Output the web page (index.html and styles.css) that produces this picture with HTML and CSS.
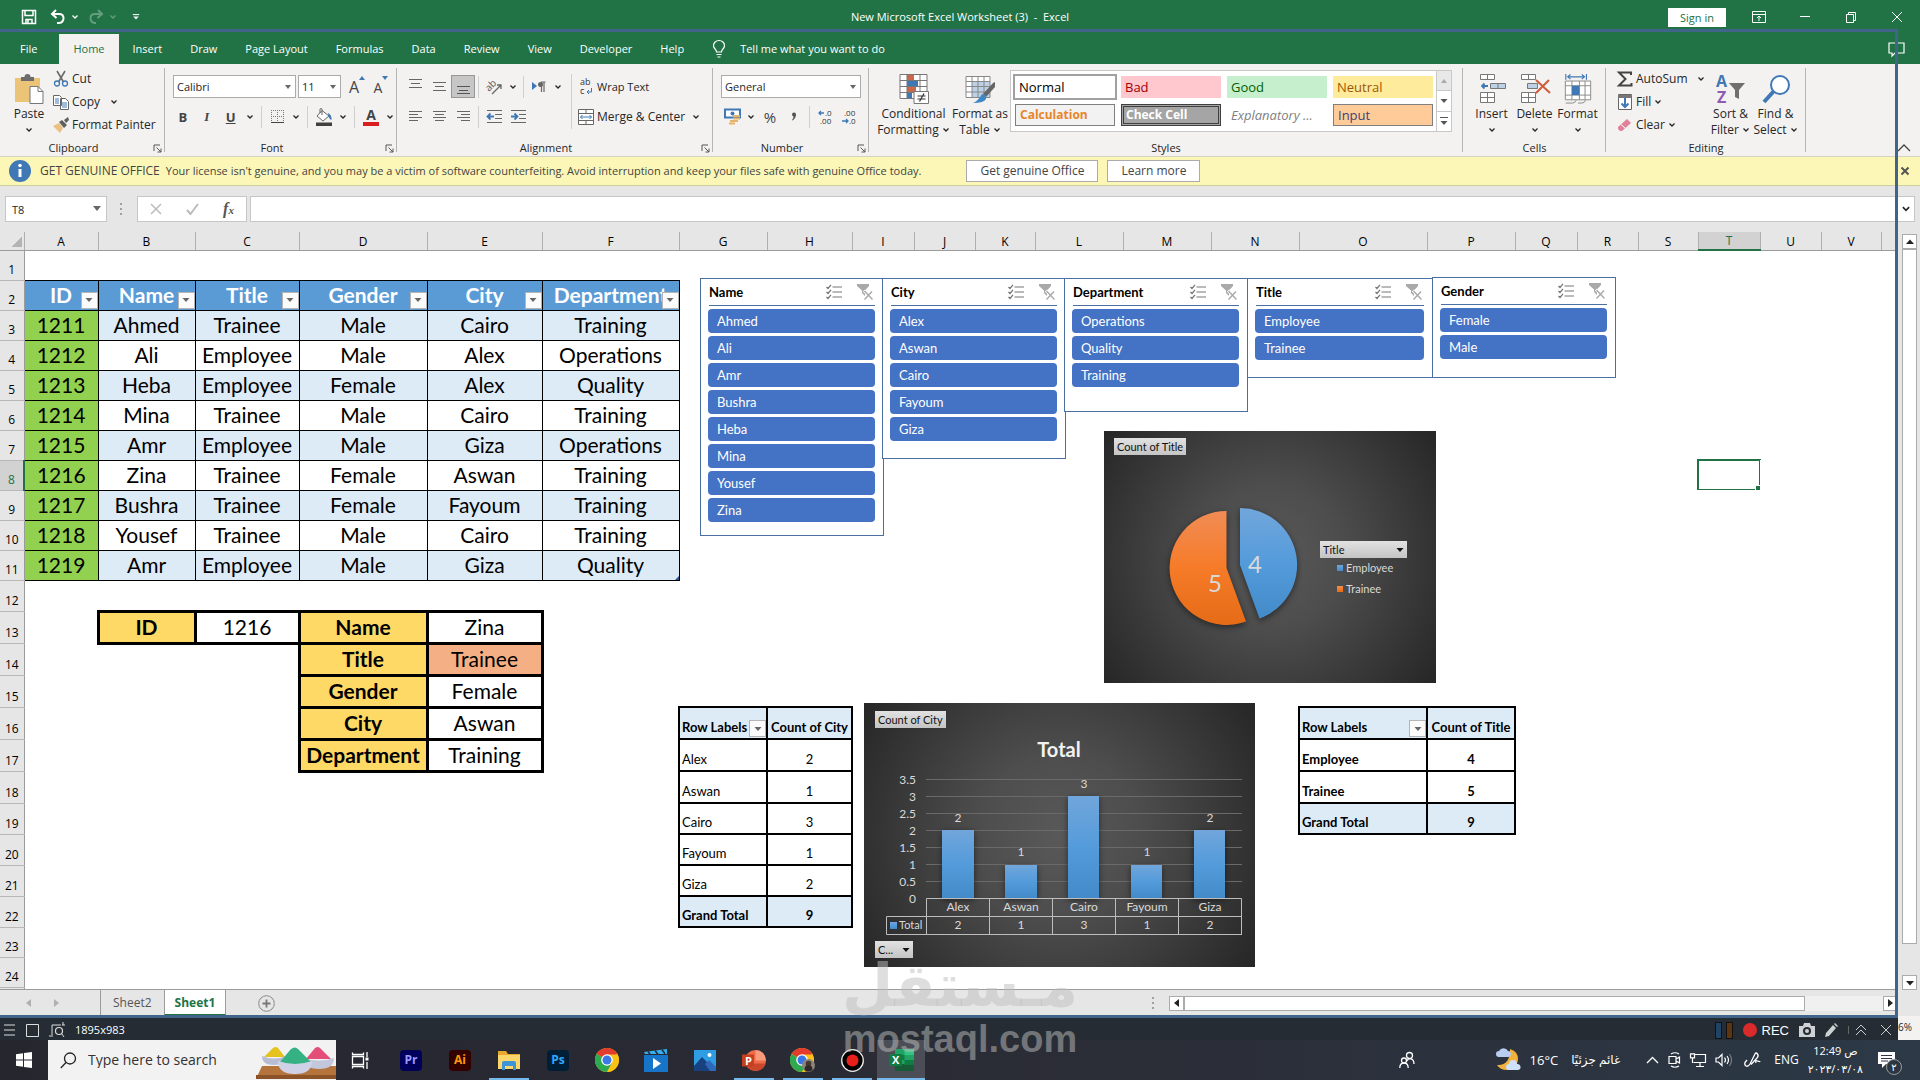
FILE: index.html
```html
<!DOCTYPE html>
<html lang="en">
<head>
    <meta charset="UTF-8">
    <meta name="viewport" content="width=device-width, initial-scale=1.0">
    <title>New Microsoft Excel Worksheet (3) - Excel</title>
    <link rel="stylesheet" href="styles.css">
</head>
<body>

<!-- shared icons -->
<svg class="defs" width="0" height="0" aria-hidden="true">
    <defs>
        <symbol id="chev" viewBox="0 0 8 8"><path d="M1.500 2.500 4 5l2.500-2.500" fill="none" stroke="currentColor" stroke-width="1.300"/></symbol>
        <symbol id="tri" viewBox="0 0 8 8"><path d="M0.500 2h7L4 6z" fill="currentColor"/></symbol>
        <symbol id="launch" viewBox="0 0 9 9"><path d="M1 7V1h6M3.500 3.500 8 8M8 4.500V8H4.500" fill="none" stroke="#555"/></symbol>
        <symbol id="multi" viewBox="0 0 16 16"><path d="M6.500 3H16M6.500 8H16M6.500 13H16M.5 3l1.500 1.500L5 .8M.5 8l1.500 1.500L5 5.800M.5 13l1.500 1.500L5 10.800" fill="none" stroke="#767676" stroke-width="1.200"/></symbol>
        <symbol id="nofilter" viewBox="0 0 16 16"><path d="M0 0h12v2L8 6.500V12L5 9V6.500L0 2z" fill="#a9a9a9"/><path d="M7 6.500l8.500 9M15.500 7 7.500 15.500" stroke="#fff" stroke-width="3"/><path d="M7.500 7l8 8.500M15 7.500l-7.500 8" stroke="#a9a9a9" stroke-width="1.400"/></symbol>
        <symbol id="chrome" viewBox="0 0 24 24"><circle cx="12" cy="12" r="12" fill="#fbc116"/><path d="M12 12 1.600 6A12 12 0 0 1 22.400 6z" fill="#e33b2e"/><path d="M12 12 1.600 6A12 12 0 0 0 12 24l5.200-9z" fill="#2da94f"/><path d="M12 6.500h10.600A12 12 0 0 1 12 24l5-9z" fill="#fbc116"/><circle cx="12" cy="12" r="5.800" fill="#fff"/><circle cx="12" cy="12" r="4.500" fill="#3b78e7"/></symbol>
        <linearGradient id="blue" x1="0" y1="0" x2="0" y2="1"><stop offset="0" stop-color="#71a6db"/><stop offset=".5" stop-color="#549bdb"/><stop offset="1" stop-color="#438ac9"/></linearGradient>
        <linearGradient id="orange" x1="0" y1="0" x2="0" y2="1"><stop offset="0" stop-color="#f18c55"/><stop offset=".5" stop-color="#f67b28"/><stop offset="1" stop-color="#e56b17"/></linearGradient>
    </defs>
</svg>

<header class="titlebar">
    <div class="quick">
        <button aria-label="Save"><svg width="16" height="16" viewBox="0 0 16 16"><path d="M1.500 1.500h13v13h-13zM4 1.500v5h8v-5M5 14.500v-4h6v4M7 11v3" fill="none" stroke="#fff" stroke-width="1.500"/></svg></button>
        <button aria-label="Undo"><svg width="16" height="16" viewBox="0 0 16 16"><path d="M6 1 2 5l4.500 4M2 5h7c6 0 6 8 0 9H7" fill="none" stroke="#fff" stroke-width="2"/></svg></button>
        <svg class="light" width="8" height="8"><use href="#chev"/></svg>
        <button class="off" aria-label="Redo"><svg width="16" height="16" viewBox="0 0 16 16"><path d="M10 1l4 4-4.500 4M14 5H7c-6 0-6 8 0 9h1" fill="none" stroke="#fff" stroke-width="2"/></svg></button>
        <svg class="light off" width="8" height="8"><use href="#chev"/></svg>
        <button class="more" aria-label="Customize toolbar"><svg width="8" height="10" viewBox="0 0 10 10"><path d="M1 2h8" stroke="#fff" stroke-width="1.300"/><path d="M1.500 4.500h7L5 8z" fill="#fff"/></svg></button>
    </div>
    <div class="doc-title">New Microsoft Excel Worksheet (3)&nbsp; -&nbsp; Excel</div>
    <div class="win">
        <button class="signin">Sign in</button>
        <button aria-label="Ribbon options"><svg width="14" height="14" viewBox="0 0 14 14"><path d="M.5 1.500h13v11H.5zM.5 4.500h13M7 11V6M5 8l2-2 2 2" fill="none" stroke="#fff"/></svg></button>
        <button aria-label="Minimize"><svg width="14" height="14" viewBox="0 0 14 14"><path d="M2 6.500h10" stroke="#fff"/></svg></button>
        <button aria-label="Restore"><svg width="14" height="14" viewBox="0 0 14 14"><path d="M2.500 4.500h7v8h-7zM4.500 4.500V2.500h7v8h-2" fill="none" stroke="#fff"/></svg></button>
        <button aria-label="Close"><svg width="14" height="14" viewBox="0 0 14 14"><path d="M2 2l10 10M12 2 2 12" stroke="#fff"/></svg></button>
    </div>
</header>

<nav class="tabs">
    <a href="#" class="file">File</a>
    <a href="#" class="on">Home</a>
    <a href="#">Insert</a>
    <a href="#">Draw</a>
    <a href="#">Page Layout</a>
    <a href="#">Formulas</a>
    <a href="#">Data</a>
    <a href="#">Review</a>
    <a href="#">View</a>
    <a href="#">Developer</a>
    <a href="#">Help</a>
    <a href="#" class="tell"><svg width="14" height="18" viewBox="0 0 14 18"><path d="M4.500 12C4.500 9 1.500 9 1.500 5.500a5.500 5 0 0 1 11 0C12.500 9 9.500 9 9.500 12zM4.500 14.500h5M5.500 17h3" fill="none" stroke="#fff" stroke-width="1.200"/></svg>Tell me what you want to do</a>
    <button class="comment" aria-label="Comments"><svg width="17" height="15" viewBox="0 0 17 15"><path d="M1 1h15v10H7l-3 3v-3H1z" fill="none" stroke="#fff" stroke-width="1.200"/></svg></button>
</nav>

<section class="ribbon">
    <div class="group clipboard">
        <div class="tools">
            <button class="big"><svg width="30" height="30" viewBox="0 0 30 30"><path d="M1 4h25v24H1z" fill="#ebc478"/><path d="M7 7V3h3.500a3 3 0 0 1 6 0H20v4z" fill="#6c6c6c"/><path d="M16 12.500h8l5 5v12H16z" fill="#fff" stroke="#777"/><path d="M24 12.500v5h5" fill="none" stroke="#777"/></svg>Paste<svg width="8" height="16"><use href="#chev"/></svg></button>
            <div class="stack">
                <button><svg width="16" height="16" viewBox="0 0 16 16"><path d="M4 0l6.500 11M12 0 5.500 11" stroke="#6a6a6a" stroke-width="1.600"/><circle cx="4" cy="12.500" r="2.500" fill="none" stroke="#3f78b5" stroke-width="1.300"/><circle cx="12" cy="12.500" r="2.500" fill="none" stroke="#3f78b5" stroke-width="1.300"/></svg>Cut</button>
                <button><svg width="16" height="16" viewBox="0 0 16 16"><path d="M.5 1.500h6l2 2v8h-8zM7.500 4.500h5l3 3v8h-8z" fill="#fff" stroke="#666"/><path d="M2 5h4M2 7h4M2 9h4M9 9h5M9 11h5M9 13h5" stroke="#3f78b5"/></svg>Copy<svg class="gap" width="8" height="8"><use href="#chev"/></svg></button>
                <button><svg width="16" height="16" viewBox="0 0 16 16"><path d="M0 9l6-3 4 5-3 5z" fill="#ebc080"/><path d="M6 5l3-2 5 5-3 3zM11 3l4-3 1 3-3 3z" fill="#5f5f5f"/></svg>Format Painter</button>
            </div>
        </div>
        <div class="name">Clipboard</div>
        <svg class="launcher" width="9" height="9"><use href="#launch"/></svg>
    </div>

    <div class="group font">
        <div class="tools rows">
            <div class="row fonts">
                <span class="combo wide"><select aria-label="Font"><option>Calibri</option></select></span>
                <span class="combo narrow"><select aria-label="Font size"><option>11</option></select></span>
                <button class="ico grow" aria-label="Increase font size">A<svg width="6" height="6"><path d="M0 5h6L3 1z" fill="#3f78b5"/></svg></button>
                <button class="ico shrink" aria-label="Decrease font size">A<svg width="6" height="6"><path d="M0 1h6L3 5z" fill="#3f78b5"/></svg></button>
            </div>
            <div class="row">
                <button class="ico"><b>B</b></button>
                <button class="ico"><i>I</i></button>
                <button class="ico"><u>U</u></button>
                <button class="drop" aria-label="Underline options"><svg width="8" height="8"><use href="#chev"/></svg></button>
                <span class="sep"></span>
                <button class="ico" aria-label="Borders"><svg width="15" height="15" viewBox="0 0 15 15"><path d="M1.500 1v12M7.500 1v12M13.500 1v12M1 1.500h13M1 7.500h13" stroke="#777" stroke-dasharray="1 1"/><path d="M1 13.500h13" stroke="#444"/></svg></button>
                <button class="drop" aria-label="Border options"><svg width="8" height="8"><use href="#chev"/></svg></button>
                <span class="sep"></span>
                <button class="ico" aria-label="Fill color"><svg width="18" height="18" viewBox="0 0 18 18"><path d="M7 2.500 14 8l-6 5-6-5zM7 7V1q0-1-2 0v4" fill="#fff" stroke="#666"/><path d="M13 5q4 2 3.500 7-3-1-3.500-7z" fill="#3f78b5"/><path d="M1 14.500h16V18H1z" fill="#404040"/></svg></button>
                <button class="drop" aria-label="Fill options"><svg width="8" height="8"><use href="#chev"/></svg></button>
                <span class="sep"></span>
                <button class="ico fcolor" aria-label="Font color">A</button>
                <button class="drop" aria-label="Font color options"><svg width="8" height="8"><use href="#chev"/></svg></button>
            </div>
        </div>
        <div class="name">Font</div>
        <svg class="launcher" width="9" height="9"><use href="#launch"/></svg>
    </div>

    <div class="group align">
        <div class="tools">
            <div class="rows left">
                <div class="row">
                    <button class="ico" aria-label="Top align"><svg width="15" height="15" viewBox="0 0 15 15"><path d="M1 .5h13M3 4.500h9M1 8.500h13" stroke="#666"/></svg></button>
                    <button class="ico" aria-label="Middle align"><svg width="15" height="15" viewBox="0 0 15 15"><path d="M1 3.500h13M3 7.500h9M1 11.500h13" stroke="#666"/></svg></button>
                    <button class="ico active" aria-label="Bottom align"><svg width="15" height="15" viewBox="0 0 15 15"><path d="M1 7.500h13M3 11.500h9M1 14.500h13" stroke="#555"/></svg></button>
                    <span class="sep"></span>
                    <button class="ico" aria-label="Orientation"><svg width="17" height="16" viewBox="0 0 17 16"><text x="0" y="10" transform="rotate(-45 5 8)" font-size="10" fill="#555">ab</text><path d="M6 15 15 6M15 10V6h-4" fill="none" stroke="#666" stroke-width="1.300"/></svg></button>
                    <button class="drop" aria-label="Orientation options"><svg width="8" height="8"><use href="#chev"/></svg></button>
                    <span class="sep"></span>
                    <button class="ico" aria-label="Text direction"><svg width="14" height="12" viewBox="0 0 14 12"><path d="M0 1l5 4-5 4z" fill="#3f78b5"/><path d="M9.500 1v10M12 1v10M13.500 1H9" stroke="#666" stroke-width="1.200" fill="none"/><circle cx="8.500" cy="3.500" r="2.500" fill="#666"/></svg></button>
                    <button class="drop" aria-label="Direction options"><svg width="8" height="8"><use href="#chev"/></svg></button>
                </div>
                <div class="row">
                    <button class="ico" aria-label="Align left"><svg width="15" height="15" viewBox="0 0 15 15"><path d="M1 2.500h13M1 5.500h9M1 8.500h13M1 11.500h9" stroke="#666"/></svg></button>
                    <button class="ico" aria-label="Center"><svg width="15" height="15" viewBox="0 0 15 15"><path d="M1 2.500h13M3 5.500h9M1 8.500h13M3 11.500h9" stroke="#666"/></svg></button>
                    <button class="ico" aria-label="Align right"><svg width="15" height="15" viewBox="0 0 15 15"><path d="M1 2.500h13M5 5.500h9M1 8.500h13M5 11.500h9" stroke="#666"/></svg></button>
                    <span class="sep"></span>
                    <button class="ico" aria-label="Decrease indent"><svg width="17" height="15" viewBox="0 0 17 15"><path d="M1 1.500h15M9 5.500h7M9 9.500h7M1 13.500h15" stroke="#666"/><path d="M8 7.500H2M4.500 4.500l-3 3 3 3" fill="none" stroke="#3f78b5" stroke-width="1.800"/></svg></button>
                    <button class="ico" aria-label="Increase indent"><svg width="17" height="15" viewBox="0 0 17 15"><path d="M1 1.500h15M9 5.500h7M9 9.500h7M1 13.500h15" stroke="#666"/><path d="M1 7.500h6M4.500 4.500l3 3-3 3" fill="none" stroke="#3f78b5" stroke-width="1.800"/></svg></button>
                </div>
            </div>
            <div class="rows right">
                <button class="row txt"><svg width="16" height="16" viewBox="0 0 16 16"><text x="2" y="6" font-size="9" fill="#333">ab</text><text x="2" y="15" font-size="9" fill="#333">c</text><path d="M13.500 9v4H9M11 11l-2 2 2 2" fill="none" stroke="#3f78b5"/></svg>Wrap Text</button>
                <button class="row txt"><svg width="16" height="16" viewBox="0 0 16 16"><path d="M.5.5h15v15H.5zM.5 4.500h15M.5 11.500h15M8 .5v4M8 11.500v4" fill="#fff" stroke="#666"/><path d="M2.500 8h11M4.500 6l-2 2 2 2M11.500 6l2 2-2 2" fill="none" stroke="#3f78b5"/></svg>Merge &amp; Center<svg class="gap" width="8" height="8"><use href="#chev"/></svg></button>
            </div>
        </div>
        <div class="name">Alignment</div>
        <svg class="launcher" width="9" height="9"><use href="#launch"/></svg>
    </div>

    <div class="group number">
        <div class="tools rows">
            <div class="row"><span class="combo full"><select aria-label="Number format"><option>General</option></select></span></div>
            <div class="row">
                <button class="ico" aria-label="Accounting format"><svg width="17" height="17" viewBox="0 0 17 17"><path d="M1 1.500h15v8H1z" fill="#fff" stroke="#3f78b5" stroke-width="2"/><circle cx="8.500" cy="5.500" r="2" fill="#3f78b5"/><path d="M9 8h7M9 10.500h7M6 13h8M5 15.500h6" stroke="#e8b26b" stroke-width="1.800"/></svg></button>
                <button class="drop" aria-label="Currency options"><svg width="8" height="8"><use href="#chev"/></svg></button>
                <button class="ico pct">%</button>
                <button class="ico pct comma" aria-label="Comma style"><svg width="6" height="9" viewBox="0 0 6 9"><path d="M1 2.500a2 2 0 1 1 4 0Q5 6 1.500 8.500L1 8q1.500-2 1.500-3.500Q1 4 1 2.500z" fill="#555"/></svg></button>
                <span class="sep"></span>
                <button class="ico" aria-label="Increase decimal"><svg width="16" height="16" viewBox="0 0 16 16"><text x="8" y="7" font-size="8" fill="#333">.0</text><text x="3" y="15" font-size="8" fill="#333">.00</text><path d="M7 4H2M4 2 2 4l2 2" fill="none" stroke="#3f78b5" stroke-width="1.300"/></svg></button>
                <button class="ico" aria-label="Decrease decimal"><svg width="16" height="16" viewBox="0 0 16 16"><text x="3" y="7" font-size="8" fill="#333">.00</text><text x="8" y="15" font-size="8" fill="#333">.0</text><path d="M1 12h6M5 10l2 2-2 2" fill="none" stroke="#3f78b5" stroke-width="1.300"/></svg></button>
            </div>
        </div>
        <div class="name">Number</div>
        <svg class="launcher" width="9" height="9"><use href="#launch"/></svg>
    </div>

    <div class="group styles">
        <div class="tools">
            <button class="big cond"><svg width="30" height="30" viewBox="0 0 30 30"><path d="M1 .5h27v24H1z" fill="#fff"/><path d="M8 .5h7v6H8zM8 12.500h9v6H8z" fill="#c9684b"/><path d="M8 6.500h11v6H8z" fill="#3f78b5"/><path d="M8 18.500h5v6H8z" fill="#3f78b5"/><path d="M1 .5h27v24H1zM1 6.500h27M1 12.500h27M1 18.500h27M8 .5v24M21 .5v24" fill="none" stroke="#777"/><path d="M15 17.500h14.500v12H15z" fill="#fff" stroke="#777"/><path d="M18.500 22h8M18.500 25h8M25 19.500l-4.500 8" stroke="#333" stroke-width="1.200"/></svg>Conditional<br>Formatting <svg width="8" height="8"><use href="#chev"/></svg></button>
            <button class="big tbl"><svg width="30" height="30" viewBox="0 0 30 30"><path d="M1 2.500h24v21H1z" fill="#fff"/><path d="M7 8h18v15H7z" fill="#bcd0e6"/><path d="M1 2.500h24v21H1zM1 7.500h24M1 12.500h24M1 18h24M7 2.500v21M13 2.500v21M19 2.500v21" fill="none" stroke="#888"/><path d="M28 9l2-1v5l-9 10-3-3z" fill="#666"/><path d="M17 20q5 1 4 5-2 4-13 4 5-2 9-9z" fill="#3f88c5"/></svg>Format as<br>Table <svg width="8" height="8"><use href="#chev"/></svg></button>
            <div class="gallery">
                <div class="swatches">
                    <button class="normal">Normal</button>
                    <button class="bad">Bad</button>
                    <button class="good">Good</button>
                    <button class="neutral">Neutral</button>
                    <button class="calc">Calculation</button>
                    <button class="check">Check Cell</button>
                    <button class="expl">Explanatory ...</button>
                    <button class="input">Input</button>
                </div>
                <div class="gscroll">
                    <button class="dim" aria-label="Previous styles"><svg width="8" height="8" viewBox="0 0 8 8"><path d="M1 6h6L4 2z" fill="#aaa"/></svg></button>
                    <button aria-label="Next styles"><svg width="8" height="8"><use href="#tri"/></svg></button>
                    <button aria-label="More styles"><svg width="8" height="10" viewBox="0 0 8 10"><path d="M0 1.500h8" stroke="#555"/><path d="M.5 5h7L4 9z" fill="#555"/></svg></button>
                </div>
            </div>
        </div>
        <div class="name">Styles</div>
    </div>

    <div class="group cells">
        <div class="tools">
            <button class="big"><svg width="28" height="30" viewBox="0 0 28 30"><path d="M2.500.5h14v5h-14zM9.500.5v5M2.500 18.500h14v10h-14zM2.500 23.500h14M9.500 18.500v10" fill="#fff" stroke="#777"/><path d="M12.500 9.500h15v5h-15zM20 9.500v5" fill="#bcd0e6" stroke="#777"/><path d="M10 12H4M6.500 9.500 4 12l2.500 2.500" fill="none" stroke="#3f78b5" stroke-width="1.800"/></svg>Insert<svg width="8" height="16"><use href="#chev"/></svg></button>
            <button class="big"><svg width="30" height="30" viewBox="0 0 30 30"><path d="M1.500.5h14v5h-14zM8.500.5v5M1.500 18.500h14v10h-14zM1.500 23.500h14M8.500 18.500v10" fill="#fff" stroke="#777"/><path d="M7.500 9.500h10v5h-10z" fill="#bcd0e6" stroke="#777"/><path d="M16 6l14 13M29 6 16 19" stroke="#cf5b3c" stroke-width="2"/></svg>Delete<svg width="8" height="16"><use href="#chev"/></svg></button>
            <button class="big"><svg width="28" height="32" viewBox="0 0 28 32"><path d="M1 0v6M23 0v6M3 3h18M6 .5 3 3l3 2.500M18 .5 21 3l-3 2.500" fill="none" stroke="#3f78b5" stroke-width="1.200"/><path d="M.5 7.500h27v20H.5z" fill="#fff"/><path d="M.5 7.500h27v20H.5zM.5 12.500h27M.5 22.500h27M7.500 7.500v20M15.500 7.500v20M21.500 7.500v20M1 31h7q3 0 4-3M14 31h4q3 0 4-3" fill="none" stroke="#888"/><path d="M7.500 12.500h8v10h-8z" fill="#3f78b5"/></svg>Format<svg width="8" height="16"><use href="#chev"/></svg></button>
        </div>
        <div class="name">Cells</div>
    </div>

    <div class="group editing">
        <div class="tools">
            <div class="stack">
                <button><svg width="16" height="16" viewBox="0 0 16 16"><path d="M14 4V1.500H2L8.500 8 2 14.500h12.500V12" fill="none" stroke="#444" stroke-width="2"/></svg>AutoSum<svg class="gap" width="8" height="8"><use href="#chev"/></svg></button>
                <button><svg width="16" height="16" viewBox="0 0 16 16"><path d="M1.500.5h13v15h-13z" fill="#fff" stroke="#666"/><path d="M1 1h14v3H1z" fill="#777"/><path d="M8 4v9M4.500 9.500 8 13l3.500-3.500" fill="none" stroke="#3f78b5" stroke-width="2"/></svg>Fill<svg class="near" width="8" height="8"><use href="#chev"/></svg></button>
                <button><svg width="16" height="16" viewBox="0 0 16 16"><path d="M1 10 10 2l4 4-9 8H3l-2-2z" fill="#e0829a"/><path d="M4 7.500l4.500 4" stroke="#fff"/></svg>Clear<svg class="near" width="8" height="8"><use href="#chev"/></svg></button>
            </div>
            <button class="big"><svg width="30" height="30" viewBox="0 0 30 30"><text x="0" y="13" font-size="16" font-weight="bold" fill="#3f78b5">A</text><text x="1" y="29" font-size="16" font-weight="bold" fill="#8e5bb0">Z</text><path d="M13 9h16l-6 7v9l-4-2v-7z" fill="#6f6f6f"/></svg>Sort &amp;<br>Filter <svg width="8" height="8"><use href="#chev"/></svg></button>
            <button class="big"><svg width="30" height="30" viewBox="0 0 30 30"><circle cx="19" cy="11" r="9" fill="#fff" stroke="#3f78b5" stroke-width="2"/><path d="M12.500 17.500 3 28" stroke="#3f78b5" stroke-width="4"/></svg>Find &amp;<br>Select <svg width="8" height="8"><use href="#chev"/></svg></button>
        </div>
        <div class="name">Editing</div>
    </div>
    <button class="collapse" aria-label="Collapse the ribbon"><svg width="14" height="10" viewBox="0 0 14 10"><path d="M1 8l6-6 6 6" fill="none" stroke="#444" stroke-width="1.300"/></svg></button>
</section>

<section class="notice">
    <svg width="22" height="22" viewBox="0 0 22 22"><circle cx="11" cy="11" r="11" fill="#3f78b5"/><path d="M11 9v8" stroke="#fff" stroke-width="3"/><circle cx="11" cy="5.500" r="1.800" fill="#fff"/></svg>
    <span class="lead">GET GENUINE OFFICE</span>
    <span class="msg">Your license isn't genuine, and you may be a victim of software counterfeiting. Avoid interruption and keep your files safe with genuine Office today.</span>
    <button class="act first">Get genuine Office</button>
    <button class="act">Learn more</button>
    <button class="x" aria-label="Close message"><svg width="8" height="8" viewBox="0 0 8 8"><path d="M.5.5l7 7M7.500.5l-7 7" stroke="#555" stroke-width="2"/></svg></button>
</section>

<section class="fbar">
    <span class="combo namebox"><input type="text" value="T8" aria-label="Name box"></span>
    <svg class="dots" width="2" height="12" viewBox="0 0 2 12"><path d="M0 0h2v2H0zM0 5h2v2H0zM0 10h2v2H0z" fill="#a0a0a0"/></svg>
    <div class="fx">
        <button aria-label="Cancel"><svg width="12" height="12" viewBox="0 0 12 12"><path d="M1 1l10 10M11 1 1 11" stroke="#bbb" stroke-width="1.500"/></svg></button>
        <button aria-label="Enter"><svg width="13" height="12" viewBox="0 0 13 12"><path d="M1 7l3.500 4L12 1" fill="none" stroke="#bbb" stroke-width="2"/></svg></button>
        <button class="fn" aria-label="Insert function">f<small>x</small></button>
    </div>
    <div class="formula"><input type="text" aria-label="Formula"><svg width="10" height="10" viewBox="0 0 8 8"><use href="#chev"/></svg></div>
</section>

<main class="work">
    <div class="sheet">
        <table class="grid">
            <colgroup>
                <col class="rh"><col class="w74"><col class="w97"><col class="w104"><col class="w128"><col class="w115"><col class="w137">
                <col class="w88"><col class="w85"><col class="w62"><col class="w61"><col class="w60"><col class="w88"><col class="w88"><col class="w88">
                <col class="w128"><col class="w88"><col class="w62"><col class="w61"><col class="w60"><col class="w62"><col class="w61"><col class="w60"><col>
            </colgroup>
            <thead>
                <tr><th class="corner"></th><th>A</th><th>B</th><th>C</th><th>D</th><th>E</th><th>F</th><th>G</th><th>H</th><th>I</th><th>J</th><th>K</th><th>L</th><th>M</th><th>N</th><th>O</th><th>P</th><th>Q</th><th>R</th><th>S</th><th class="sel">T</th><th>U</th><th>V</th><th></th></tr>
            </thead>
            <tbody>
                <tr><th>1</th><td colspan="23"></td></tr>
                <tr class="data head"><th>2</th>
                    <td>ID<button class="flt" aria-label="Filter ID"><svg width="8" height="8"><use href="#tri"/></svg></button></td>
                    <td>Name<button class="flt" aria-label="Filter Name"><svg width="8" height="8"><use href="#tri"/></svg></button></td>
                    <td>Title<button class="flt" aria-label="Filter Title"><svg width="8" height="8"><use href="#tri"/></svg></button></td>
                    <td>Gender<button class="flt" aria-label="Filter Gender"><svg width="8" height="8"><use href="#tri"/></svg></button></td>
                    <td>City<button class="flt" aria-label="Filter City"><svg width="8" height="8"><use href="#tri"/></svg></button></td>
                    <td>Department<button class="flt" aria-label="Filter Department"><svg width="8" height="8"><use href="#tri"/></svg></button></td>
                    <td class="no" colspan="17"></td></tr>
                <tr class="data band"><th>3</th><td>1211</td><td>Ahmed</td><td>Trainee</td><td>Male</td><td>Cairo</td><td>Training</td><td class="no" colspan="17"></td></tr>
                <tr class="data"><th>4</th><td>1212</td><td>Ali</td><td>Employee</td><td>Male</td><td>Alex</td><td>Operations</td><td class="no" colspan="17"></td></tr>
                <tr class="data band"><th>5</th><td>1213</td><td>Heba</td><td>Employee</td><td>Female</td><td>Alex</td><td>Quality</td><td class="no" colspan="17"></td></tr>
                <tr class="data"><th>6</th><td>1214</td><td>Mina</td><td>Trainee</td><td>Male</td><td>Cairo</td><td>Training</td><td class="no" colspan="17"></td></tr>
                <tr class="data band"><th>7</th><td>1215</td><td>Amr</td><td>Employee</td><td>Male</td><td>Giza</td><td>Operations</td><td class="no" colspan="17"></td></tr>
                <tr class="data"><th class="sel">8</th><td>1216</td><td>Zina</td><td>Trainee</td><td>Female</td><td>Aswan</td><td>Training</td><td class="no" colspan="13"></td><td class="no cursor"></td><td class="no" colspan="3"></td></tr>
                <tr class="data band"><th>9</th><td>1217</td><td>Bushra</td><td>Trainee</td><td>Female</td><td>Fayoum</td><td>Training</td><td class="no" colspan="17"></td></tr>
                <tr class="data"><th>10</th><td>1218</td><td>Yousef</td><td>Trainee</td><td>Male</td><td>Cairo</td><td>Training</td><td class="no" colspan="17"></td></tr>
                <tr class="data band"><th>11</th><td>1219</td><td>Amr</td><td>Employee</td><td>Male</td><td>Giza</td><td class="last">Quality</td><td class="no" colspan="17"></td></tr>
                <tr class="h31"><th>12</th><td colspan="23"></td></tr>
                <tr class="h32"><th>13</th><td></td><td class="key">ID</td><td class="val">1216</td><td class="key">Name</td><td class="val">Zina</td><td colspan="18"></td></tr>
                <tr class="h32"><th>14</th><td colspan="3"></td><td class="key">Title</td><td class="val hot">Trainee</td><td colspan="18"></td></tr>
                <tr class="h32"><th>15</th><td colspan="3"></td><td class="key">Gender</td><td class="val">Female</td><td colspan="18"></td></tr>
                <tr class="h32"><th>16</th><td colspan="3"></td><td class="key">City</td><td class="val">Aswan</td><td></td>
                    <td class="pv tot">Row Labels<button class="flt" aria-label="Filter city labels"><svg width="8" height="8"><use href="#tri"/></svg></button></td><td class="pn tot">Count of City</td><td colspan="6"></td>
                    <td class="pv tot">Row Labels<button class="flt" aria-label="Filter title labels"><svg width="8" height="8"><use href="#tri"/></svg></button></td><td class="pn tot">Count of Title</td><td colspan="7"></td></tr>
                <tr class="h32"><th>17</th><td colspan="3"></td><td class="key">Department</td><td class="val">Training</td><td></td><td class="pv">Alex</td><td class="pn">2</td><td colspan="6"></td><td class="pv strong">Employee</td><td class="pn strong">4</td><td colspan="7"></td></tr>
                <tr class="h32"><th>18</th><td colspan="6"></td><td class="pv">Aswan</td><td class="pn">1</td><td colspan="6"></td><td class="pv strong">Trainee</td><td class="pn strong">5</td><td colspan="7"></td></tr>
                <tr class="h31"><th>19</th><td colspan="6"></td><td class="pv">Cairo</td><td class="pn">3</td><td colspan="6"></td><td class="pv tot">Grand Total</td><td class="pn tot">9</td><td colspan="7"></td></tr>
                <tr class="h31"><th>20</th><td colspan="6"></td><td class="pv">Fayoum</td><td class="pn">1</td><td colspan="15"></td></tr>
                <tr class="h31"><th>21</th><td colspan="6"></td><td class="pv">Giza</td><td class="pn">2</td><td colspan="15"></td></tr>
                <tr class="h31"><th>22</th><td colspan="6"></td><td class="pv tot">Grand Total</td><td class="pn tot">9</td><td colspan="15"></td></tr>
                <tr><th>23</th><td colspan="23"></td></tr>
                <tr><th>24</th><td colspan="23"></td></tr>
                <tr><th></th><td colspan="23"></td></tr>
            </tbody>
        </table>

        <!-- slicers and charts float over the cells -->
        <div class="slicer s-name">
            <h2>Name<svg width="16" height="16"><use href="#multi"/></svg><svg width="16" height="16"><use href="#nofilter"/></svg></h2>
            <button>Ahmed</button><button>Ali</button><button>Amr</button><button>Bushra</button><button>Heba</button><button>Mina</button><button>Yousef</button><button>Zina</button>
        </div>
        <div class="slicer s-city">
            <h2>City<svg width="16" height="16"><use href="#multi"/></svg><svg width="16" height="16"><use href="#nofilter"/></svg></h2>
            <button>Alex</button><button>Aswan</button><button>Cairo</button><button>Fayoum</button><button>Giza</button>
        </div>
        <div class="slicer s-dept">
            <h2>Department<svg width="16" height="16"><use href="#multi"/></svg><svg width="16" height="16"><use href="#nofilter"/></svg></h2>
            <button>Operations</button><button>Quality</button><button>Training</button>
        </div>
        <div class="slicer s-title">
            <h2>Title<svg width="16" height="16"><use href="#multi"/></svg><svg width="16" height="16"><use href="#nofilter"/></svg></h2>
            <button>Employee</button><button>Trainee</button>
        </div>
        <div class="slicer s-gender">
            <h2>Gender<svg width="16" height="16"><use href="#multi"/></svg><svg width="16" height="16"><use href="#nofilter"/></svg></h2>
            <button>Female</button><button>Male</button>
        </div>

        <div class="chart pie">
            <svg width="332" height="252" viewBox="0 0 332 252">
                <g class="shade">
                    <path d="M136 134V77A57 57 0 0 1 155.500 187.600z" fill="url(#blue)"/>
                    <path d="M122.500 137 142 190.600A57 57 0 1 1 122.500 80z" fill="url(#orange)"/>
                </g>
                <text class="big-num" x="151" y="142">4</text>
                <text class="big-num" x="111" y="161">5</text>
                <path d="M233 134h6v6h-6z" fill="url(#blue)"/><text class="leg" x="242" y="141">Employee</text>
                <path d="M233 155h6v6h-6z" fill="url(#orange)"/><text class="leg" x="242" y="162">Trainee</text>
            </svg>
            <button class="fieldbtn field-pie">Count of Title</button>
            <button class="fieldbtn legend-pie">Title<svg width="8" height="8"><use href="#tri"/></svg></button>
        </div>

        <div class="chart bars">
            <svg width="391" height="264" viewBox="0 0 391 264">
                <text class="ttl" x="195" y="54">Total</text>
                <path d="M62 76.500h316M62 93.500h316M62 110.500h316M62 127.500h316M62 144.500h316M62 161.500h316M62 178.500h316" stroke="#6a6a6a" stroke-width="1"/>
                <g class="ax"><text x="52" y="81">3.5</text><text x="52" y="98">3</text><text x="52" y="115">2.5</text><text x="52" y="132">2</text><text x="52" y="149">1.5</text><text x="52" y="166">1</text><text x="52" y="183">0.5</text><text x="52" y="200">0</text></g>
                <g class="shade" fill="url(#blue)">
                    <path d="M78 127h32v68H78z"/><path d="M141 162h32v33h-32z"/><path d="M204 93h31v102h-31z"/><path d="M267 162h31v33h-31z"/><path d="M330 127h31v68h-31z"/>
                </g>
                <path d="M62.500 195.500h315v36h-315zM22.500 213.500h355v18h-355zM125.500 195.500v36M188.500 195.500v36M251.500 195.500v36M314.500 195.500v36" fill="none" stroke="#bdbdbd"/>
                <g class="mid">
                    <text x="94" y="119">2</text><text x="157" y="153">1</text><text x="220" y="85">3</text><text x="283" y="153">1</text><text x="346" y="119">2</text>
                    <text x="94" y="208">Alex</text><text x="157" y="208">Aswan</text><text x="220" y="208">Cairo</text><text x="283" y="208">Fayoum</text><text x="346" y="208">Giza</text>
                    <text x="94" y="226">2</text><text x="157" y="226">1</text><text x="220" y="226">3</text><text x="283" y="226">1</text><text x="346" y="226">2</text>
                </g>
                <path d="M26 219h7v7h-7z" fill="url(#blue)"/><text class="leg" x="35" y="226">Total</text>
            </svg>
            <button class="fieldbtn field-bar">Count of City</button>
            <button class="fieldbtn axis-bar">C...<svg width="8" height="8"><use href="#tri"/></svg></button>
        </div>
    </div>
    <div class="vscroll">
        <button aria-label="Scroll up"><svg width="8" height="8" viewBox="0 0 8 8"><path d="M0 6h8L4 1.500z" fill="#222"/></svg></button>
        <div class="vthumb"></div>
        <button aria-label="Scroll down"><svg width="8" height="8" viewBox="0 0 8 8"><path d="M0 2h8L4 6.500z" fill="#222"/></svg></button>
    </div>
</main>

<footer class="sheetbar">
    <div class="navs"><svg width="5" height="8" viewBox="0 0 5 8"><path d="M5 0v8L0 4z" fill="#b0b0b0"/></svg><svg width="5" height="8" viewBox="0 0 5 8"><path d="M0 0v8l5-4z" fill="#b0b0b0"/></svg></div>
    <a href="#" class="stab">Sheet2</a>
    <a href="#" class="stab cur">Sheet1</a>
    <button class="add" aria-label="New sheet"><svg width="17" height="17" viewBox="0 0 17 17"><circle cx="8.500" cy="8.500" r="7.800" fill="none" stroke="#888"/><path d="M8.500 4.500v8M4.500 8.500h8" stroke="#777" stroke-width="1.800"/></svg></button>
    <svg class="dots" width="2" height="12" viewBox="0 0 2 12"><path d="M0 0h2v2H0zM0 5h2v2H0zM0 10h2v2H0z" fill="#a0a0a0"/></svg>
    <div class="hscroll">
        <button aria-label="Scroll left"><svg width="5" height="8" viewBox="0 0 5 8"><path d="M5 0v8L0 4z" fill="#222"/></svg></button>
        <div class="hthumb"></div>
        <button aria-label="Scroll right"><svg width="5" height="8" viewBox="0 0 5 8"><path d="M0 0v8l5-4z" fill="#222"/></svg></button>
    </div>
</footer>

<section class="bottom">
    <div class="recorder">
        <svg width="12" height="12" viewBox="0 0 12 12"><path d="M0 1h11M0 6h11M0 11h11" stroke="#ddd"/></svg>
        <svg width="13" height="13" viewBox="0 0 13 13"><path d="M.5.500h12v12H.5z" fill="none" stroke="#ddd"/></svg>
        <svg width="16" height="16" viewBox="0 0 16 16"><path d="M3 15V3h9M14 0v3M13 3h3" fill="none" stroke="#ddd"/><path d="M0 14h2" stroke="#ddd"/><circle cx="10" cy="9" r="3.500" fill="none" stroke="#ddd" stroke-width="1.200"/><path d="M12.500 11.500 15 15" stroke="#ddd"/></svg>
        <span class="dim-text">1895x983</span>
        <span class="bar-b"></span><span class="bar-o"></span>
        <span class="red"></span><span class="rec">REC</span>
        <svg class="cam" width="16" height="14" viewBox="0 0 16 14"><path d="M0 3h4l1-3h6l1 3h4v11H0z" fill="#cfd2d4"/><circle cx="8" cy="8" r="4" fill="#252c33"/><circle cx="8" cy="8" r="2" fill="#cfd2d4"/></svg>
        <svg class="pen" width="13" height="14" viewBox="0 0 13 14"><path d="M0 14l1-4 7-8 3 3-7 8zM9 1l1-1 3 3-1 1z" fill="#cfd2d4"/></svg>
        <svg class="up" width="20" height="12" viewBox="0 0 20 12"><path d="M.5 2v8" stroke="#666"/><path d="M8 6l5-5 5 5M8 11l5-5 5 5" fill="none" stroke="#ccc"/></svg>
        <svg class="cl" width="10" height="10" viewBox="0 0 10 10"><path d="M0 0l10 10M10 0 0 10" stroke="#ccc"/></svg>
    </div>
    <div class="zoom">6%</div>
</section>

<section class="taskbar">
    <button class="start" aria-label="Start"><svg width="16" height="16" viewBox="0 0 16 16"><path d="M0 2.200 7 1.200v6.300H0zM8 1l8-1v7.500H8zM0 8.500h7v6.300l-7-1zM8 8.500h8V16l-8-1.100z" fill="#fff"/></svg></button>
    <label class="search">
        <svg width="17" height="17" viewBox="0 0 17 17"><circle cx="10" cy="6.500" r="5.500" fill="none" stroke="#222" stroke-width="1.300"/><path d="M6 10.500.800 16" stroke="#222" stroke-width="1.300"/></svg>
        <input type="text" placeholder="Type here to search" aria-label="Search">
        <svg width="80" height="38" viewBox="0 0 80 38">
            <path d="M6 25h74v13H0z" fill="#b5743c"/><path d="M0 34h80v4H0z" fill="#8c5228"/>
            <path d="M8 16 17 7q3-2 5 0l7 9z" fill="#e6c21d"/><path d="M6 15q12 5 24 0 0 9-12 9T6 15z" fill="#b8bdd4"/>
            <path d="M50 18 59 7q3-2 5 0l11 11z" fill="#e34f79"/><path d="M47 17q16 5 31 0 0 11-15 11T47 17z" fill="#c3c7db"/>
            <path d="M24 21 35 8q4-3 7 0l13 13q-15 5-31 0z" fill="#35b183"/><path d="M22 20q17 6 34 0 0 13-17 13T22 20z" fill="#cfd2e6"/>
        </svg>
    </label>
    <button class="app tv" aria-label="Task view"><svg width="17" height="17" viewBox="0 0 17 17"><path d="M.5 2V.5M.5.500v2h11v-2M.5 4.500h11v8H.5zM.5 16.500v-2h11v2M15 0v5M15 10v7" fill="none" stroke="#fff" stroke-width="1.300"/><path d="M13.500 5.500h3v3h-3z" fill="#fff"/></svg></button>
    <div class="apps">
        <button class="app"><span class="adobe pr">Pr</span></button>
        <button class="app"><span class="adobe ai">Ai</span></button>
        <button class="app open" aria-label="File Explorer"><svg width="22" height="19" viewBox="0 0 22 19"><path d="M0 0h8l2 3h12v15H0z" fill="#e8a92c"/><path d="M0 4h22v14H0z" fill="#fbd66b"/><path d="M4 19v-7q0-2 2-2h10q2 0 2 2v7h-3v-4H7v4z" fill="#3d94d6"/></svg></button>
        <button class="app"><span class="adobe ps">Ps</span></button>
        <button class="app" aria-label="Chrome"><svg width="24" height="24"><use href="#chrome"/></svg></button>
        <button class="app" aria-label="Movies"><svg width="24" height="23" viewBox="0 0 24 23"><path d="M0 3 23 0v5H1z" fill="#36b0ea"/><path d="M4 2.500l3 4M11 1.500l3 4M18 .8l3 4" stroke="#1c2c4a" stroke-width="1.500"/><path d="M0 6h24v17H0z" fill="#1675c9"/><path d="M9 9l8 5.500L9 20z" fill="#fff"/></svg></button>
        <button class="app" aria-label="Photos"><svg width="22" height="21" viewBox="0 0 22 21"><path d="M0 0h22v21H0z" fill="#2f9de4"/><path d="M0 16 8 7l14 14H0z" fill="#17427f"/><path d="M11 14l4-4 7 7v4H16z" fill="#2f68b8"/><circle cx="15.500" cy="5" r="2" fill="#fff"/></svg></button>
        <button class="app open" aria-label="PowerPoint"><svg width="24" height="21" viewBox="0 0 24 21"><circle cx="13.500" cy="10.500" r="10.500" fill="#ee6c4a"/><path d="M13.500 0A10.500 10.500 0 0 1 24 10.500H13.500z" fill="#fa9a7c"/><path d="M3.500 13.500h20a10.500 10.500 0 0 1-20 0z" fill="#c9472b"/><path d="M0 4.500h12v12H0z" fill="#c4401f"/><text x="3" y="14.500" font-size="11" font-weight="bold" fill="#fff">P</text></svg></button>
        <button class="app open" aria-label="Chrome profile"><svg width="26" height="24" viewBox="0 0 26 24"><use href="#chrome" width="24" height="24"/><circle cx="18.500" cy="17.500" r="6.500" fill="#8d857c"/><circle cx="18.500" cy="15.500" r="2.800" fill="#46372f"/><path d="M14.500 22q0-5 4-5t4 5q-4 3-8 0z" fill="#2f2a2a"/></svg></button>
        <button class="app open" aria-label="Recorder"><svg width="23" height="23" viewBox="0 0 23 23"><circle cx="11.500" cy="11.500" r="10.800" fill="#000" stroke="#eee" stroke-width="1.300"/><circle cx="11.500" cy="11.500" r="6" fill="#e8201c"/></svg></button>
        <button class="app open cur" aria-label="Excel"><svg width="25" height="22" viewBox="0 0 25 22"><path d="M6 0h19v22H6z" fill="#21a366"/><path d="M15.500 0H25v6h-9.500z" fill="#33c481"/><path d="M6 6h9.500v5H6z" fill="#107c41"/><path d="M6 15h19v7H6z" fill="#185c37"/><path d="M15.500 11H25v5h-9.500z" fill="#107c41"/><path d="M0 5h13v12H0z" fill="#107c41"/><text x="3" y="15" font-size="11" font-weight="bold" fill="#fff">X</text></svg></button>
    </div>
    <div class="tray">
        <svg class="people" width="16" height="17" viewBox="0 0 16 17"><circle cx="10.500" cy="3.500" r="3" fill="none" stroke="#fff" stroke-width="1.300"/><circle cx="5" cy="8.500" r="2.500" fill="none" stroke="#fff" stroke-width="1.300"/><path d="M.8 16q0-5 4.200-5t4.200 5M8 9q1-2.500 3-2.300Q15 7 15 12" fill="none" stroke="#fff" stroke-width="1.300"/></svg>
        <svg class="wx" width="25" height="24" viewBox="0 0 25 24"><path d="M14 1q9 3 8 11T11 22Q4 22 1 17q13 1 13-16z" fill="#f2b13c"/><path d="M3 9a3 3 0 0 1 0-6 5 5 0 0 1 9 0 3 3 0 0 1 0 6z" fill="#b9cdf0"/><path d="M13 22a3 3 0 0 1 0-6 4 4 0 0 1 8 0 3 3 0 0 1 1 6z" fill="#cfe0fa"/></svg>
        <span class="temp">16°C</span><span class="cond-ar" lang="ar" dir="rtl">غائم جزئيًا</span>
        <svg width="13" height="8" viewBox="0 0 13 8"><path d="M1 7l5.500-5.500L12 7" fill="none" stroke="#fff" stroke-width="1.300"/></svg>
        <svg width="13" height="16" viewBox="0 0 13 16"><path d="M1 4.500h7v7H1zM8 7l3.500-2v6L8 9M3 2q4-2.500 8 0M3 14q4 2.500 8 0" fill="none" stroke="#fff" stroke-width="1.200"/></svg>
        <svg width="16" height="15" viewBox="0 0 16 15"><path d="M5 1.500h10.500v8h-12M10 9.500v4M6 13.500h8M.5.800h4v4h-4zM2.500 5v5" fill="none" stroke="#fff" stroke-width="1.200"/></svg>
        <svg width="17" height="14" viewBox="0 0 17 14"><path d="M1 5h2.500L7 1.500v11L3.500 9H1zM9.500 4.500q2 2.500 0 5M12 3q3 4 0 8" fill="none" stroke="#fff" stroke-width="1.200"/><path d="M14.500 1q4 6 0 12" fill="none" stroke="#888"/></svg>
        <svg class="ink" width="17" height="16" viewBox="0 0 17 16"><path d="M6 12l5-10q1-2 2.500 0t-.5 4L7 12.500M3 8q-4 4-1 6 2 1 4-2M12 11q-1-3 1.500-2T16 9" fill="none" stroke="#fff" stroke-width="1.300"/></svg>
        <span class="eng">ENG</span>
        <div class="clock"><span>12:49 ص</span><span>٢٠٢٣/٠٣/٠٨</span></div>
        <div class="notif"><svg width="17" height="16" viewBox="0 0 17 16"><path d="M0 0h17v12H8l-4 4v-4H0z" fill="#fff"/><path d="M3 3.500h11M3 6.500h11M3 9h7" stroke="#2c3643"/></svg><span>٢</span></div>
    </div>
</section>

<!-- screen recorder outline and watermark -->
<div class="frame"></div>
<div class="mark"><span lang="ar" dir="rtl">مـستقل</span><b>mostaql.com</b></div>

</body>
</html>
```
FILE: styles.css
```css
* { box-sizing: border-box; }

body {
    margin: 0;
    height: 100vh;
    display: flex;
    flex-direction: column;
    position: relative;
    overflow: hidden;
    font-family: "Open Sans", "Noto Sans", sans-serif;
    font-size: 12px;
    line-height: 16px;
    color: #262626;
    background: #e6e6e6;
}

button, input, select {
    font: inherit;
    color: inherit;
    border: 0;
    padding: 0;
    margin: 0;
    background: none;
    border-radius: 0;
    outline: 0;
}
a { color: inherit; text-decoration: none; }
svg { flex: none; display: block; overflow: visible; }
.defs { position: absolute; }

/* title bar */
.titlebar {
    display: grid;
    grid-template-columns: 1fr auto 1fr;
    align-items: center;
    height: 34px;
    background: #217346;
    color: #fff;
    font-size: 11px;
}
.quick { display: flex; align-items: center; gap: 5px; padding-left: 21px; }
.quick button { margin-left: 4px; }
.quick button:first-child { margin: 0 4px 0 0; }
.quick .more { margin-left: 10px; }
.light { color: #fff; }
.off { opacity: 0.3; }
.win { display: flex; align-items: center; justify-content: flex-end; height: 30px; }
.win button { width: 46px; display: flex; justify-content: center; }
.win .signin { width: 58px; height: 19px; line-height: 19px; margin-right: 10px; background: #fff; color: #217346; }

/* tabs */
.tabs { display: flex; height: 30px; background: #217346; color: #fff; font-size: 11px; }
.tabs a { display: flex; align-items: center; padding: 0 14px; height: 30px; }
.tabs .file { padding: 0 22px 0 20px; }
.tabs .on { background: #f3f2f1; color: #217346; }
.tabs .tell { gap: 14px; }
.comment { margin-left: auto; padding-right: 15px; }

/* ribbon */
.ribbon { display: flex; position: relative; height: 93px; background: #f3f2f1; border-bottom: 1px solid #d5d2bd; }
.group { position: relative; display: flex; flex-direction: column; flex: none; }
.group::after { content: ""; position: absolute; right: 0; top: 4px; bottom: 4px; width: 1px; background: #b5b5b5; }
.tools { display: flex; height: 76px; }
.name { text-align: center; line-height: 16px; font-size: 11px; padding-right: 18px; }
.styles .name, .cells .name, .editing .name { padding-right: 0; }
.launcher { position: absolute; right: 3px; bottom: 3px; }
.clipboard { width: 165px; }
.font { width: 232px; }
.align { width: 316px; }
.number { width: 156px; }
.styles { width: 594px; }
.cells { width: 143px; }
.editing { width: 200px; }

.big { display: block; height: 76px; text-align: center; padding-top: 8px; line-height: 16px; white-space: nowrap; }
.big > svg { margin: 0 auto; }
.big > svg:first-child { margin-bottom: 2px; height: 30px; }
.big br ~ svg { display: inline; }
.stack { display: flex; flex-direction: column; padding-top: 3px; }
.stack button { display: flex; align-items: center; gap: 3px; height: 23px; white-space: nowrap; }
.stack .gap { margin-left: 7px; }
.clipboard .big { width: 48px; margin-left: 5px; }

.rows { display: flex; flex-direction: column; gap: 7px; padding-top: 11px; }
.row { display: flex; align-items: center; height: 23px; }
.ico { width: 24px; height: 23px; display: flex; align-items: center; justify-content: center; color: #444; }
.ico b, .ico i, .ico u { font-size: 13px; font-weight: bold; }
.ico i { font-family: "Liberation Serif", serif; }
.active { background: #c6c6c6; border: 1px solid #979797; }
.drop { width: 14px; display: flex; justify-content: center; }
.sep { width: 1px; height: 22px; margin: 0 3px; background: #d0d0d0; }
.font .sep { margin: 0 4px; }
.font .tools { padding-left: 6px; }
.fonts { padding-left: 2px; gap: 2px; }
.combo { position: relative; display: block; height: 23px; background: #fff; border: 1px solid #ababab; }
.combo::after { content: ""; position: absolute; right: 4px; top: 9px; border: 3px solid transparent; border-top: 4px solid #666; border-bottom: 0; }
.combo select, .combo input { width: 100%; height: 21px; appearance: none; padding-left: 3px; font-size: 11px; }
.wide { width: 123px; }
.narrow { width: 43px; }
.full { width: 140px; }
.grow, .shrink { align-items: flex-start; width: 22px; }
.grow { font-size: 16px; line-height: 24px; margin-left: 3px; }
.shrink { font-size: 14px; line-height: 26px; }
.fcolor { width: 16px; height: 18px; margin: 0 4px; font-weight: bold; font-size: 14px; line-height: 14px; border-bottom: 4px solid #d81e1e; }
.left { padding-left: 6px; }
.right { margin-left: 6px; position: relative; padding-left: 7px; }
.right::before { content: ""; position: absolute; left: 0; top: 10px; height: 55px; width: 1px; background: #d0d0d0; }
.txt { gap: 3px; }
.txt:first-child { font-size: 11px; }
.txt .gap { margin-left: 4px; }
.number .tools { padding-left: 7px; }
.number .combo { margin-left: 1px; }
.pct { font-size: 15px; }

.styles .tools { padding-left: 7px; }
.cond { width: 75px; }
.tbl { width: 58px; }
.gallery { display: flex; height: 62px; margin: 6px 0 0 1px; background: #fff; border: 1px solid #c8c8c8; }
.swatches { display: grid; grid-template-columns: repeat(4, 100px); grid-template-rows: 22px 22px; gap: 6px; padding: 5px 3px 5px 4px; }
.swatches button { text-align: left; padding-left: 4px; font-size: 13px; }
.normal { outline: 2px solid #a0a0a0; color: #000; }
.bad { background: #ffc7ce; color: #9c0006; }
.good { background: #c6efce; color: #006100; }
.neutral { background: #ffeb9c; color: #9c5700; }
.swatches .calc { background: #f2f2f2; color: #e8842a; border: 1px solid #7f7f7f; font-weight: bold; font-size: 12px; }
.swatches .check { background: #a5a5a5; color: #fff; border: 3px double #3f3f3f; font-weight: bold; font-size: 12px; padding-left: 2px; }
.swatches .expl { color: #7f7f7f; font-style: italic; }
.swatches .input { background: #ffcc99; color: #3f3f76; border: 1px solid #7f7f7f; }
.gscroll { display: flex; flex-direction: column; width: 15px; border-left: 1px solid #c8c8c8; }
.gscroll button { flex: 1; display: flex; align-items: center; justify-content: center; border-bottom: 1px solid #c8c8c8; color: #555; }
.gscroll button:last-child { border: 0; }
.dim { background: #e8e8e8; }

.cells .tools { padding-left: 7px; }
.cells .big { width: 43px; }
.editing .tools { padding-left: 11px; }
.editing .stack { width: 91px; }
.editing .stack .gap { margin-left: 6px; }
.editing .big { width: 45px; }
.collapse { position: absolute; right: 9px; bottom: 3px; }

/* licence message */
.notice { display: flex; align-items: center; height: 29px; padding-left: 9px; background: #fcf7b6; border-bottom: 1px solid #d0cf9e; color: #444; }
.lead { margin: 0 6px 0 9px; }
.msg { font-size: 11px; }
.act { height: 22px; padding: 0 13px; border: 1px solid #ababab; background: #fff; margin-right: 9px; }
.first { margin-left: 45px; }
.x { margin: 0 11px 0 auto; }

/* formula bar */
.fbar { display: flex; align-items: center; padding: 10px 5px; height: 46px; }
.namebox { width: 102px; height: 26px; border-color: #c6c6c6; }
.namebox input { height: 24px; padding-left: 6px; }
.namebox::after { border: 4px solid transparent; border-top: 5px solid #666; border-bottom: 0; right: 5px; }
.dots { margin: 0 15px 0 13px; }
.fx { display: flex; align-items: center; justify-content: space-around; width: 110px; height: 26px; background: #fff; border: 1px solid #c6c6c6; margin-right: 3px; }
.fn { font: italic bold 16px "Liberation Serif", serif; color: #555; }
.fn small { font-size: 11px; }
.formula { display: flex; align-items: center; flex: 1; height: 26px; background: #fff; border: 1px solid #c6c6c6; padding-right: 3px; }
.formula input { flex: 1; }

/* worksheet */
.work { display: flex; flex: 1; min-height: 0; }
.sheet { position: relative; flex: 1; overflow: hidden; background: #fff; border-bottom: 1px solid #9b9b9b; }
.grid { width: 100%; table-layout: fixed; border-collapse: collapse; font-family: Lato, sans-serif; font-size: 21px; line-height: 24px; color: #000; }
.grid td, .grid th { padding: 0; }
.grid tr { height: 30px; }
.grid thead tr { height: 18px; }
.grid tr.h31 { height: 31px; }
.grid tr.h32 { height: 32px; }
.grid th { background: #e6e6e6; font: 12px/16px "Open Sans", sans-serif; vertical-align: bottom; border-right: 1px solid #9b9b9b; border-bottom: 1px solid #b8b8b8; }
.grid tbody th { padding-bottom: 2px; }
.grid thead th { border-color: #b0b0b0; border-bottom-color: #9b9b9b; }
.grid .corner { background: linear-gradient(135deg, transparent 60%, #b4b4b4 60%) 8px 3px / 14px 12px no-repeat #e6e6e6; }
.grid .sel { background: #d2d2d2; color: #217346; border-bottom: 2px solid #217346; }
.grid tbody .sel { border-bottom: 1px solid #b8b8b8; border-right: 2px solid #217346; }
.rh { width: 24px; }
.w60 { width: 60px; } .w61 { width: 61px; } .w62 { width: 62px; } .w74 { width: 74px; }
.w85 { width: 85px; } .w88 { width: 88px; } .w97 { width: 97px; } .w104 { width: 104px; }
.w115 { width: 115px; } .w128 { width: 128px; } .w137 { width: 137px; }

.data td { border: 1px solid #000; text-align: center; position: relative; }
.data .no { border: 0; background: #fff; }
.band td { background: #ddebf7; }
.data th + td { background: #92d050; }
.head td, .head th + td { background: #5b9bd5; color: #fff; font-weight: bold; }
.flt { position: absolute; right: 0; bottom: 1px; width: 17px; height: 17px; display: flex; align-items: center; justify-content: center; background: #fbfbfb; border: 1px solid #b5b5b5; color: #666; }
.last::after { content: ""; position: absolute; right: 0; bottom: 0; border: 2px solid #2f5597; border-top-color: transparent; border-left-color: transparent; }
.grid .cursor { position: relative; outline: 2px solid #217346; outline-offset: -1px; }
.cursor::after { content: ""; position: absolute; right: -3px; bottom: -3px; width: 6px; height: 6px; background: #217346; border: 1px solid #fff; }
.key, .val { border: 3px solid #000; text-align: center; }
.key { background: #ffd966; font-weight: bold; }
.hot { background: #f4b084; }
.grid .pv, .grid .pn { border: 2px solid #000; font-size: 13px; line-height: 18px; vertical-align: bottom; padding-bottom: 2px; position: relative; }
.grid .pv { padding-left: 2px; white-space: nowrap; }
.grid .pn { text-align: center; white-space: nowrap; }
.strong, .tot { font-weight: bold; }
.tot { background: #ddebf7; }

.slicer { position: absolute; width: 184px; padding: 0 8px 0 7px; background: #fff; border: 1px solid #4a6fa0; font: 13px/24px Lato, sans-serif; }
.slicer h2 { display: flex; align-items: center; gap: 15px; height: 27px; margin: 0 0 3px 1px; padding-right: 2px; font-size: 13px; color: #000; border-bottom: 1px solid #4a6fa0; }
.slicer h2 svg:first-of-type { margin-left: auto; }
.slicer button { display: block; width: 100%; height: 24px; margin-bottom: 3px; padding-left: 9px; text-align: left; color: #fff; background: #4472c4; border-radius: 4px; }
.s-name { left: 700px; top: 46px; height: 258px; }
.s-city { left: 882px; top: 46px; height: 181px; }
.s-dept { left: 1064px; top: 46px; height: 134px; }
.s-title { left: 1247px; top: 46px; width: 186px; height: 100px; }
.s-gender { left: 1432px; top: 45px; height: 101px; }

.chart { position: absolute; background: radial-gradient(circle, #595959 0%, #4d4d4d 35%, #262626 100%); font: 12px/16px Lato, sans-serif; }
.chart text { fill: #d9d9d9; font-size: 12px; }
.chart .leg { font-size: 11px; }
.chart .big-num { font-size: 24px; text-anchor: middle; }
.chart .ttl { font-size: 20px; font-weight: bold; fill: #f2f2f2; text-anchor: middle; }
.ax text { text-anchor: end; }
.mid text { text-anchor: middle; }
.shade { filter: drop-shadow(0 2px 3px rgba(0, 0, 0, 0.5)); }
.pie { left: 1104px; top: 199px; }
.bars { left: 864px; top: 471px; }
.fieldbtn { position: absolute; display: flex; align-items: center; justify-content: space-between; height: 17px; padding: 0 3px; background: linear-gradient(#e2e2e2, #c4c4c4); color: #111; font-size: 11px; white-space: nowrap; }
.field-pie { left: 10px; top: 7px; }
.legend-pie { left: 216px; top: 110px; width: 87px; }
.field-bar { left: 11px; top: 8px; }
.axis-bar { left: 11px; top: 238px; width: 38px; }

.vscroll { display: flex; flex-direction: column; width: 22px; padding: 2px 3px 0 4px; background: #e6e6e6; }
.vscroll button, .hscroll button { display: flex; align-items: center; justify-content: center; flex: none; width: 15px; height: 15px; background: #fff; border: 1px solid #ababab; }
.vthumb { flex: 1; background: #fff; border: 1px solid #ababab; margin-bottom: 31px; }

/* sheet tabs */
.sheetbar { display: flex; align-items: center; height: 26px; flex: none; background: #e6e6e6; }
.navs { display: flex; gap: 23px; width: 100px; padding-left: 26px; }
.stab { height: 26px; line-height: 26px; padding: 0 12px; border-left: 1px solid #9b9b9b; border-right: 1px solid #9b9b9b; color: #555; }
.cur.stab { margin-left: -1px; padding: 0 10px; background: #fff; color: #217346; font-weight: bold; border-bottom: 2px solid #217346; }
.add { margin-left: 32px; }
.sheetbar .dots { margin: 0 15px 0 auto; }
.hscroll { display: flex; width: 729px; margin-right: 22px; background: #f0f0f0; }
.hthumb { flex: 1; margin-right: 78px; background: #fff; border: 1px solid #ababab; }

/* recorder strip */
.bottom { display: flex; height: 24px; flex: none; }
.recorder { display: flex; align-items: center; flex: 1; padding: 4px 7px 0 4px; background: #252c33; color: #fff; gap: 10px; }
.dim-text { font-size: 11px; margin-right: auto; }
.bar-b, .bar-o { width: 7px; height: 17px; background: #1f4468; border: 1px solid #111; margin-right: -6px; }
.bar-o { background: #5c3512; margin-right: 0; }
.red { width: 14px; height: 14px; border-radius: 50%; background: #d92b2b; margin-right: -5px; }
.rec { font: 13px "Liberation Sans", sans-serif; }
.cl { margin-left: 3px; }
.zoom { width: 22px; background: #f3f2f1; font-size: 10px; line-height: 22px; }

/* task bar */
.taskbar { display: flex; align-items: center; height: 40px; flex: none; background: linear-gradient(90deg, #25262e, #2b2d37 60%, #2c3947); color: #fff; }
.start { width: 48px; display: flex; justify-content: center; }
.search { display: flex; align-items: center; width: 288px; height: 40px; padding-left: 12px; background: #f2f2f2; color: #333; }
.search input { flex: 1; min-width: 0; padding-left: 11px; font-size: 14px; }
.search input::placeholder { color: #333; opacity: 1; }
.app { display: flex; align-items: center; justify-content: center; width: 48px; height: 40px; position: relative; }
.tv { margin-right: 3px; }
.apps { display: flex; gap: 1px; }
.open::after { content: ""; position: absolute; left: 4px; right: 4px; bottom: 0; height: 2px; background: #76b9ed; }
.app.cur { background: #4b4e56; }
.cur.open::after { left: 0; right: 0; }
.adobe { width: 22px; height: 21px; border-radius: 4px; font-weight: bold; font-size: 12px; line-height: 20px; text-align: center; }
.pr { background: #00005b; color: #9999ff; }
.ai { background: #330000; color: #ff9a00; }
.ps { background: #001e36; color: #31a8ff; }
.tray { display: flex; align-items: center; gap: 9px; margin-left: auto; font-family: "Open Sans", "DejaVu Sans", sans-serif; padding-right: 25px; height: 40px; }
.people { margin-right: 72px; }
.temp { font-size: 13px; }
.cond-ar { font-size: 12px; margin: 0 17px 0 4px; }
.ink { margin: 0 4px 0 3px; }
.clock { display: flex; flex-direction: column; align-items: center; font-size: 11px; line-height: 18px; }
.notif { position: relative; margin-left: 6px; }
.notif span { position: absolute; left: 8px; top: 7px; width: 16px; height: 16px; border-radius: 50%; border: 1px solid #999; background: #2c3643; font-size: 10px; line-height: 14px; text-align: center; }

.frame { position: absolute; left: 0; right: 22px; top: 29px; bottom: 62px; border: 3px solid #41658a; border-left: 0; pointer-events: none; }
.mark { position: absolute; left: 845px; bottom: 21px; width: 230px; display: flex; flex-direction: column; align-items: center; color: rgba(190, 190, 190, 0.5); pointer-events: none; }
.mark span { font: bold 59px/66px "DejaVu Sans", sans-serif; }
.mark b { font: bold 38px/40px "Liberation Sans", sans-serif; }
```
